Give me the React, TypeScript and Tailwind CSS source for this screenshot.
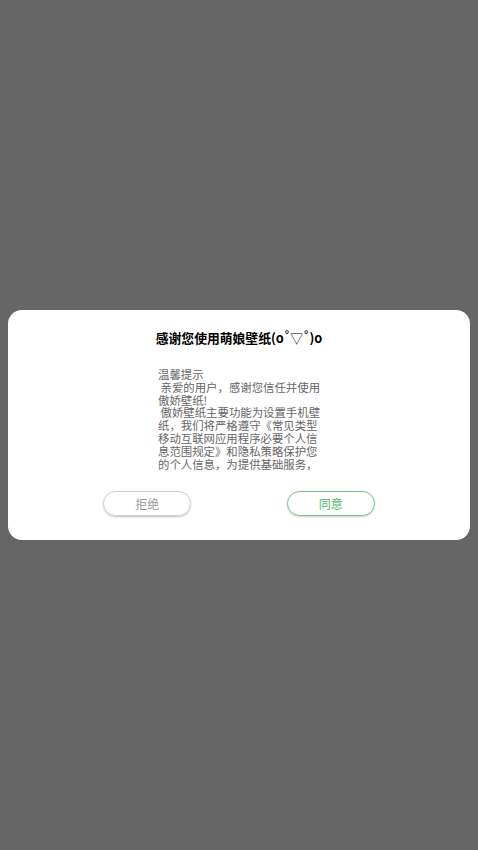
export default function App() {
  const font = { fontFamily: '"Noto Sans CJK SC", "Noto Sans", sans-serif' };
  const lines = [
    "温馨提示",
    " 亲爱的用户，感谢您信任并使用",
    "傲娇壁纸!",
    " 傲娇壁纸主要功能为设置手机壁",
    "纸，我们将严格遵守《常见类型",
    "移动互联网应用程序必要个人信",
    "息范围规定》和隐私策略保护您",
    "的个人信息，为提供基础服务，",
  ];
  return (
    <div className="w-full h-[850px] bg-[#666666] flex items-center px-2" style={font}>
      <div className="w-full h-[230px] bg-white rounded-[14px] flex flex-col items-center">
        <div className="mt-[19px] h-[18px] flex items-center text-[12.8px] font-bold text-black leading-[18px] whitespace-nowrap">
          <span>感谢您使用萌娘壁纸(o</span>
          <span className="font-normal" style={{ fontFamily: '"DejaVu Sans", sans-serif' }}>˚</span>
          <span className="font-normal">▽</span>
          <span className="font-normal" style={{ fontFamily: '"DejaVu Sans", sans-serif' }}>˚</span>
          <span>)o</span>
        </div>
        <div className="mt-[21px] w-[162px] h-[102px] text-[11.4px] leading-[12.8px] text-[#666666]">
          {lines.map((l, i) => (
            <div key={i} className="whitespace-pre">{l}</div>
          ))}
        </div>
        <div className="mt-[21px] w-full flex justify-evenly">
          <button className="w-[88px] h-[25px] rounded-full border border-[#cfcfcf] shadow-[0_1px_2px_rgba(0,0,0,0.25)] text-[12px] text-[#999999] flex items-center justify-center">
            拒绝
          </button>
          <button className="w-[88px] h-[25px] rounded-full border border-[#6cc584] shadow-[0_1px_2px_rgba(0,0,0,0.2)] text-[12px] text-[#4fb86c] flex items-center justify-center">
            同意
          </button>
        </div>
      </div>
    </div>
  );
}
